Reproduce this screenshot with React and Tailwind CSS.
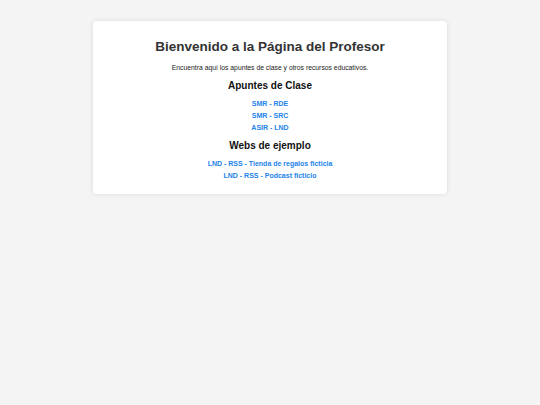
const apuntes = ["SMR - RDE", "SMR - SRC", "ASIR - LND"];
const webs = ["LND - RSS - Tienda de regalos ficticia", "LND - RSS - Podcast ficticio"];

export default function App() {
  return (
    <div className="min-h-[405px] bg-[#f4f4f4] pt-[21px] font-['Liberation_Sans',Arial,sans-serif]">
      <div className="mx-auto w-[354px] rounded-[4px] bg-white px-4 pt-[17px] pb-[14px] text-center shadow-[0_0_5px_rgba(0,0,0,0.1)]">
        <h1 className="text-[13.5px] leading-[17px] font-bold text-[#333]">
          Bienvenido a la Página del Profesor
        </h1>
        <p className="mt-[8px] text-[6.8px] leading-[9px] text-[#222]">
          Encuentra aquí los apuntes de clase y otros recursos educativos.
        </p>

        {/* Apuntes */}
        <h2 className="mt-[7px] text-[10px] leading-[13px] font-bold text-[#111]">Apuntes de Clase</h2>
        <ul className="mt-[7px] flex flex-col gap-[3px]">
          {apuntes.map((a) => (
            <li key={a} className="text-[7px] leading-[9px]">
              <a href="#" className="font-bold text-[#2283ea]">{a}</a>
            </li>
          ))}
        </ul>

        {/* Webs */}
        <h2 className="mt-[7px] text-[10px] leading-[13px] font-bold text-[#111]">Webs de ejemplo</h2>
        <ul className="mt-[7px] flex flex-col gap-[3px]">
          {webs.map((w) => (
            <li key={w} className="text-[7px] leading-[9px]">
              <a href="#" className="font-bold text-[#2283ea]">{w}</a>
            </li>
          ))}
        </ul>
      </div>
    </div>
  );
}
